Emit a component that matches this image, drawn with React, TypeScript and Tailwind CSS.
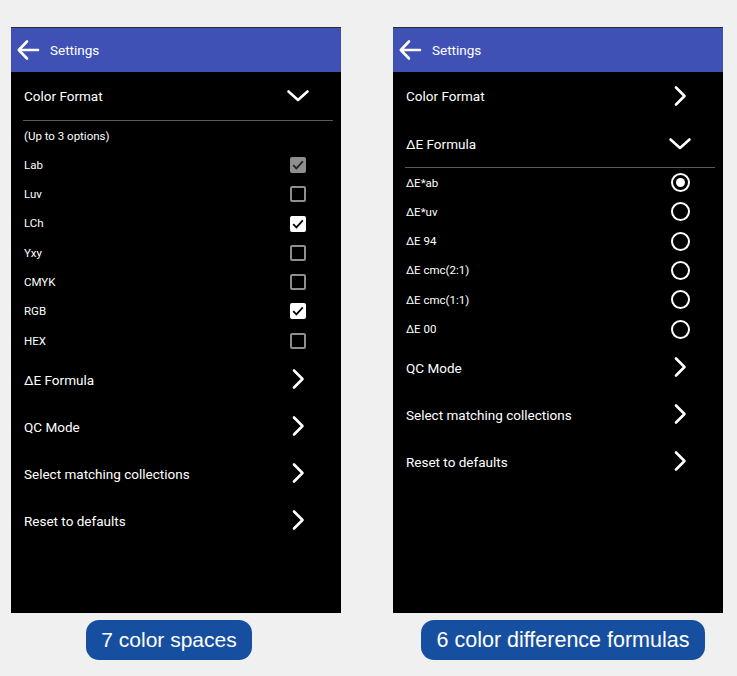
import type { ReactNode } from 'react';

type Check = 'off' | 'on' | 'locked';

const formats: { name: string; state: Check }[] = [
  { name: 'Lab', state: 'locked' },
  { name: 'Luv', state: 'off' },
  { name: 'LCh', state: 'on' },
  { name: 'Yxy', state: 'off' },
  { name: 'CMYK', state: 'off' },
  { name: 'RGB', state: 'on' },
  { name: 'HEX', state: 'off' },
];

const formulas = ['ΔE*ab', 'ΔE*uv', 'ΔE 94', 'ΔE cmc(2:1)', 'ΔE cmc(1:1)', 'ΔE 00'];

function ChevronRight() {
  return (
    <svg width="14" height="22" viewBox="0 0 14 22" fill="none" stroke="white" strokeWidth="2.6" strokeLinecap="round" strokeLinejoin="round">
      <path d="M3 2.5l8.5 8.5L3 19.5" />
    </svg>
  );
}

function ChevronDown() {
  return (
    <svg width="24" height="14" viewBox="0 0 24 14" fill="none" stroke="white" strokeWidth="2.6" strokeLinecap="round" strokeLinejoin="round">
      <path d="M2.5 2.5L12 11l9.5-8.5" />
    </svg>
  );
}

function Checkbox({ state }: { state: Check }) {
  if (state === 'off') {
    return <div className="h-4 w-4 rounded-[2px] border-2 border-[#8e8e8e]" />;
  }
  const fill = state === 'on' ? 'bg-white' : 'bg-[#8e8e8e]';
  return (
    <div className={`flex h-4 w-4 items-center justify-center rounded-[2px] ${fill}`}>
      <svg width="12" height="10" viewBox="0 0 12 10" fill="none" stroke={state === 'on' ? '#000' : '#222'} strokeWidth="1.8">
        <path d="M1.2 5.2l3.2 3.2 6.4-7" />
      </svg>
    </div>
  );
}

function Radio({ on }: { on: boolean }) {
  return (
    <div className="flex h-[19px] w-[19px] items-center justify-center rounded-full border-2 border-white">
      {on && <div className="h-[9px] w-[9px] rounded-full bg-white" />}
    </div>
  );
}

function Icon({ children }: { children: ReactNode }) {
  return <div className="mr-[28px] flex w-[30px] items-center justify-center">{children}</div>;
}

function MenuRow({ label, open }: { label: string; open?: boolean }) {
  return (
    <div className="flex h-[47px] items-center justify-between pl-[13px] text-[13.5px] text-white">
      <span className="mt-[2px]">{label}</span>
      <Icon>{open ? <ChevronDown /> : <ChevronRight />}</Icon>
    </div>
  );
}

function OptionRow({ label, children }: { label: string; children?: ReactNode }) {
  return (
    <div className="flex h-[29.3px] items-center justify-between pl-[13px] text-[11.5px] text-white">
      <span className="mt-px">{label}</span>
      {children && <Icon>{children}</Icon>}
    </div>
  );
}

function Phone({ children }: { children: ReactNode }) {
  return (
    <div className="h-[586px] w-[330px] bg-black">
      <div className="flex h-[45px] items-center border-t border-[#2a2a2a] bg-[#3f51b5] pl-[5px] text-[13.5px] text-white">
        <svg width="24" height="22" viewBox="0 0 24 22" fill="none" stroke="white" strokeWidth="2.6" strokeLinecap="round" strokeLinejoin="round">
          <path d="M22 11H3M11 2.5L2.8 11l8.2 8.5" />
        </svg>
        <span className="ml-[10px] mt-px">Settings</span>
      </div>
      {children}
    </div>
  );
}

function Divider() {
  return <div className="ml-[12px] mr-[8px] h-px bg-[#5a5a5a]" />;
}

export default function App() {
  return (
    <div className="h-[676px] w-[737px] bg-[#f0f0f0] pl-[11px] pt-[27px]" style={{ fontFamily: 'Roboto, "Noto Sans", sans-serif' }}>
      <div className="flex gap-[52px]">
        <div className="flex flex-col">
          <Phone>
            <div className="h-[48px]">
              <MenuRow label="Color Format" open />
            </div>
            <Divider />
            <OptionRow label="(Up to 3 options)" />
            {formats.map((f) => (
              <OptionRow key={f.name} label={f.name}>
                <Checkbox state={f.state} />
              </OptionRow>
            ))}
            <MenuRow label="ΔE Formula" />
            <MenuRow label="QC Mode" />
            <MenuRow label="Select matching collections" />
            <MenuRow label="Reset to defaults" />
          </Phone>
          <div
            className="ml-[75px] mt-[7px] flex h-[40px] w-[166px] items-center justify-center rounded-[13px] bg-[#174fa0] text-[21px] text-white"
            style={{ fontFamily: '"Liberation Sans", Arial, sans-serif' }}
          >
            7 color spaces
          </div>
        </div>
        <div className="flex flex-col">
          <Phone>
            <div className="h-[48px]">
              <MenuRow label="Color Format" />
            </div>
            <div className="h-[47px]">
              <MenuRow label="ΔE Formula" open />
            </div>
            <Divider />
            {formulas.map((f, i) => (
              <OptionRow key={f} label={f}>
                <Radio on={i === 0} />
              </OptionRow>
            ))}
            <MenuRow label="QC Mode" />
            <MenuRow label="Select matching collections" />
            <MenuRow label="Reset to defaults" />
          </Phone>
          <div
            className="ml-[28px] mt-[7px] flex h-[40px] w-[284px] items-center justify-center rounded-[13px] bg-[#174fa0] text-[21.5px] text-white"
            style={{ fontFamily: '"Liberation Sans", Arial, sans-serif' }}
          >
            6 color difference formulas
          </div>
        </div>
      </div>
    </div>
  );
}
